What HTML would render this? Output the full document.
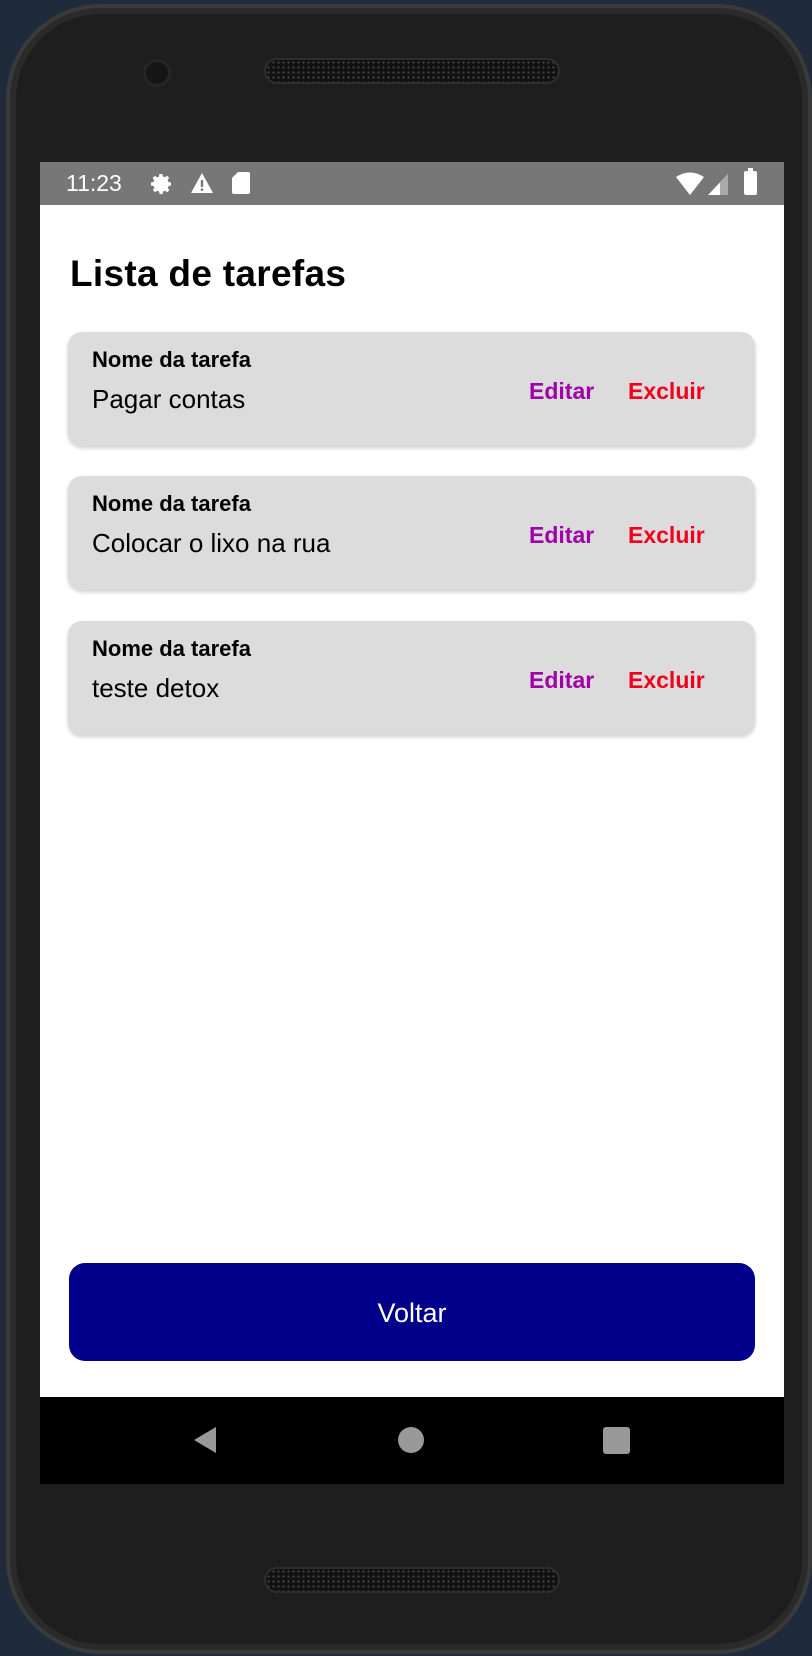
<!DOCTYPE html>
<html><head><meta charset="utf-8"><style>
*{margin:0;padding:0;box-sizing:border-box}
body{width:812px;height:1656px;background:#1f2b3a;position:relative;overflow:hidden;font-family:"Liberation Sans",sans-serif}
.phone{position:absolute;left:6px;top:4px;width:806px;height:1650px;border-radius:95px;background:#1e1e1f;border:4px solid #3a3a3a;box-shadow:inset 0 0 0 6px #2a2a2a}
.spk{position:absolute;left:264px;width:296px;height:26px;border-radius:13px;background:#111;border:2px solid #2e2e2e;background-image:radial-gradient(#444 1px,transparent 1.3px);background-size:5px 5px}
.cam{position:absolute;left:143px;top:59px;width:28px;height:28px;border-radius:50%;background:#151515;border:3px solid #262626}
.screen{position:absolute;left:40px;top:162px;width:744px;height:1322px;background:#fff}
.status{height:43px;background:#777;position:relative;color:#fff}
.nav{position:absolute;left:0;top:1235px;width:744px;height:87px;background:#000}
h1{position:absolute;left:30px;top:91px;font-size:37px;font-weight:bold;color:#000;letter-spacing:0.3px}
.card{position:absolute;left:28px;width:687px;height:114px;background:#dcdcdc;border-radius:14px;box-shadow:0 2px 4px rgba(0,0,0,.2)}
.lab{position:absolute;left:24px;top:15px;font-size:22px;font-weight:bold;color:#000}
.val{position:absolute;left:24px;top:52px;font-size:26px;color:#000}
.ed{position:absolute;left:461px;top:46px;font-size:23px;font-weight:bold;color:#a000a8}
.ex{position:absolute;left:560px;top:46px;font-size:23px;font-weight:bold;color:#f0001e}
.btn{position:absolute;left:29px;top:1101px;width:686px;height:98px;background:#00008b;border-radius:16px;color:#fff;font-size:27px;text-align:center;line-height:100px}
</style></head><body>
<div class="phone"></div>
<div class="spk" style="top:58px"></div>
<div class="spk" style="top:1567px"></div>
<div class="cam"></div>
<div class="screen">
 <div class="status">
  <span style="position:absolute;left:26px;top:8px;font-size:23px">11:23</span>
  <svg style="position:absolute;left:110px;top:10px" width="24" height="24" viewBox="0 0 24 24"><path fill="#fff" d="M12 8a4 4 0 1 0 0 8 4 4 0 0 0 0-8zm9 5.5v-3l-2.6-.5-.8-1.9 1.5-2.2-2.1-2.1-2.2 1.5-1.9-.8L12.4 2h-3l-.5 2.6-1.9.8-2.2-1.5-2.1 2.1 1.5 2.2-.8 1.9L1 10.5v3l2.6.5.8 1.9-1.5 2.2 2.1 2.1 2.2-1.5 1.9.8.5 2.6h3l.5-2.6 1.9-.8 2.2 1.5 2.1-2.1-1.5-2.2.8-1.9z"/></svg>
  <svg style="position:absolute;left:150px;top:10px" width="24" height="22" viewBox="0 0 24 22"><path fill="#fff" d="M12 1 1 21h22z"/><rect x="10.8" y="8" width="2.4" height="7" fill="#777"/><rect x="10.8" y="16.5" width="2.4" height="2.4" fill="#777"/></svg>
  <svg style="position:absolute;left:192px;top:9px" width="18" height="24" viewBox="0 0 18 24"><path fill="#fff" d="M6 1h10a2 2 0 0 1 2 2v18a2 2 0 0 1-2 2H2a2 2 0 0 1-2-2V7z"/></svg>
  <svg style="position:absolute;left:636px;top:10px" width="30" height="24" viewBox="0 0 30 24"><path fill="#fff" d="M0 5Q14-4 28 5L14 23z"/></svg>
  <svg style="position:absolute;left:668px;top:10px" width="24" height="24" viewBox="0 0 24 24"><path fill="#fff" d="M20 2v21H0z"/><path fill="#aaa" d="M20 2v21h-8V10z"/></svg>
  <div style="position:absolute;left:704px;top:9px;width:13px;height:24px;background:#fff;border-radius:2px"></div>
  <div style="position:absolute;left:708px;top:6px;width:5px;height:4px;background:#fff"></div>
 </div>
 <h1>Lista de tarefas</h1>
 <div class="card" style="top:170px"><div class="lab">Nome da tarefa</div><div class="val">Pagar contas</div><div class="ed">Editar</div><div class="ex">Excluir</div></div>
 <div class="card" style="top:314px"><div class="lab">Nome da tarefa</div><div class="val">Colocar o lixo na rua</div><div class="ed">Editar</div><div class="ex">Excluir</div></div>
 <div class="card" style="top:459px"><div class="lab">Nome da tarefa</div><div class="val">teste detox</div><div class="ed">Editar</div><div class="ex">Excluir</div></div>
 <div class="btn">Voltar</div>
 <div class="nav">
  <svg style="position:absolute;left:150px;top:28px" width="30" height="30" viewBox="0 0 30 30"><path fill="#999" d="M26 2v26L4 15z"/></svg>
  <div style="position:absolute;left:358px;top:30px;width:26px;height:26px;border-radius:50%;background:#999"></div>
  <div style="position:absolute;left:563px;top:30px;width:27px;height:27px;border-radius:3px;background:#999"></div>
 </div>
</div>
</body></html>
